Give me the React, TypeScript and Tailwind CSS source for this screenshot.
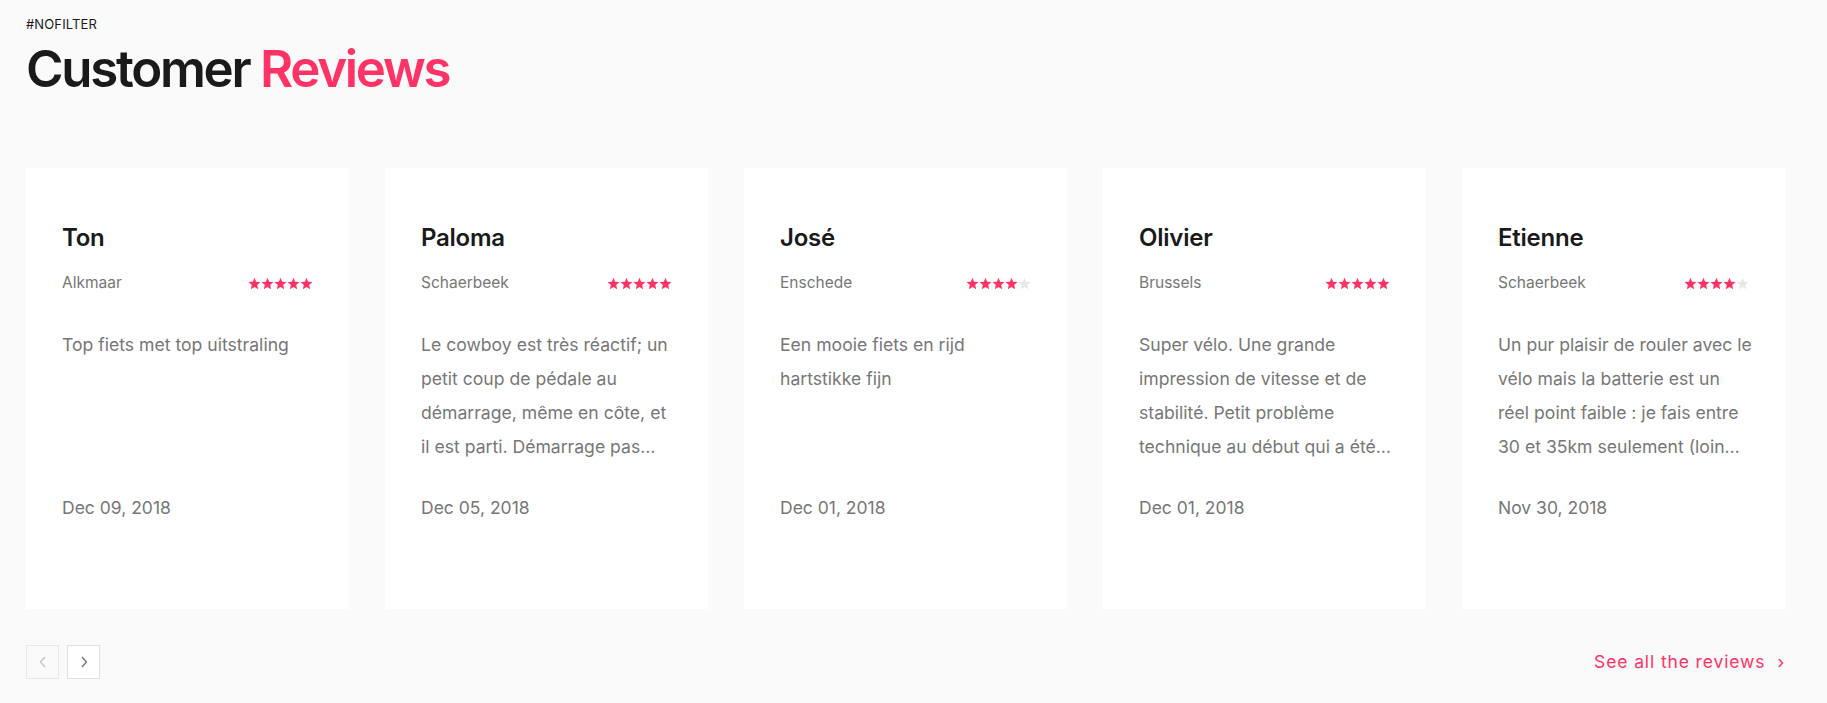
import React from "react";

type Review = { name: string; city: string; rating: number; text: string; date: string };

const reviews: Review[] = [
  { name: "Ton", city: "Alkmaar", rating: 5, text: "Top fiets met top uitstraling", date: "Dec 09, 2018" },
  {
    name: "Paloma",
    city: "Schaerbeek",
    rating: 5,
    text: "Le cowboy est très réactif; un petit coup de pédale au démarrage, même en côte, et il est parti. Démarrage pas…",
    date: "Dec 05, 2018",
  },
  { name: "José", city: "Enschede", rating: 4, text: "Een mooie fiets en rijd hartstikke fijn", date: "Dec 01, 2018" },
  {
    name: "Olivier",
    city: "Brussels",
    rating: 5,
    text: "Super vélo. Une grande impression de vitesse et de stabilité. Petit problème technique au début qui a été…",
    date: "Dec 01, 2018",
  },
  {
    name: "Etienne",
    city: "Schaerbeek",
    rating: 4,
    text: "Un pur plaisir de rouler avec le vélo mais la batterie est un réel point faible : je fais entre 30 et 35km seulement (loin…",
    date: "Nov 30, 2018",
  },
];

function Star({ filled }: { filled: boolean }) {
  return (
    <svg width="13" height="13" viewBox="0 0 24 24" className={filled ? "text-[#ff3366]" : "text-[#e8e8e8]"}>
      <path
        fill="currentColor"
        d="M12 1.5l3.09 7.26 7.91.69-6 5.2 1.8 7.75L12 18.3l-6.8 4.1 1.8-7.75-6-5.2 7.91-.69z"
      />
    </svg>
  );
}

function Card({ r }: { r: Review }) {
  return (
    <div className="bg-white w-[323px] h-[441px] shrink-0 px-[36px] pt-[55px] flex flex-col">
      <div className="text-[24px] leading-[30px] font-semibold text-[#1a1a1a] tracking-[-0.01em]">{r.name}</div>
      <div className="mt-[20px] h-[20px] flex items-center justify-between">
        <span className="text-[15.5px] leading-[20px] text-[#777777]">{r.city}</span>
        <span className="flex">
          {[0, 1, 2, 3, 4].map((i) => (
            <Star key={i} filled={i < r.rating} />
          ))}
        </span>
      </div>
      <div className="mt-[35px] h-[136px] w-[257px]">
        <p className="text-[17.6px] leading-[34px] text-[#777777]">{r.text}</p>
      </div>
      <div className="mt-[32px] text-[17.5px] leading-[24px] text-[#777777]">{r.date}</div>
    </div>
  );
}

export default function App() {
  return (
    <div
      className="min-h-[703px] w-full bg-[#fafafa] px-[26px] pt-[16px]"
      style={{ fontFamily: "Inter, 'Noto Sans', sans-serif" }}
    >
      <div className="text-[13px] leading-[16px] text-[#1a1a1a] tracking-[0.01em]">#NOFILTER</div>
      <h1 className="mt-[11px] text-[51px] leading-[52px] font-semibold tracking-[-0.045em] text-[#1a1a1a]">
        Customer <span className="text-[#ff3366]">Reviews</span>
      </h1>
      <div className="mt-[73px] flex gap-[36px]">
        {reviews.map((r) => (
          <Card key={r.name} r={r} />
        ))}
      </div>
      <div className="mt-[36px] flex items-center justify-between w-[1759px]">
        <div className="flex gap-[8px]">
          <button className="w-[33px] h-[34px] border border-[#e8e8e8] bg-[#fafafa] flex items-center justify-center">
            <svg width="10" height="14" viewBox="0 0 10 14" fill="none" stroke="#c4c4c4" strokeWidth="1.4">
              <path d="M7 2L2.5 7 7 12" />
            </svg>
          </button>
          <button className="w-[33px] h-[34px] border border-[#e0e0e0] bg-white flex items-center justify-center">
            <svg width="10" height="14" viewBox="0 0 10 14" fill="none" stroke="#777" strokeWidth="1.4">
              <path d="M3 2l4.5 5L3 12" />
            </svg>
          </button>
        </div>
        <a className="text-[17.5px] text-[#ff3366] tracking-[0.05em] flex items-center gap-[12px]">
          <span>See all the reviews</span>
          <span>›</span>
        </a>
      </div>
    </div>
  );
}
